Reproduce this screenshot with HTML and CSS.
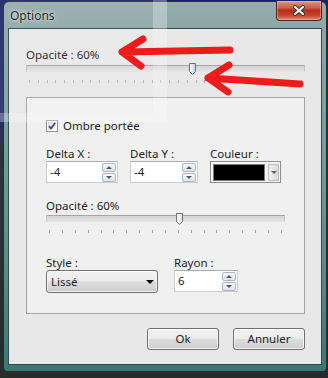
FILE: index.html
```html
<!DOCTYPE html>
<html>
<head>
<meta charset="utf-8">
<link rel="stylesheet" href="styles.css">
</head>
<body>
<div class="window">
  <div class="titlebar">
    <span class="title">Options</span>
    <div class="close">
      <svg width="12" height="11" viewBox="0 0 12 11"><path d="M2,2 L10,9 M10,2 L2,9" stroke="#3a3a3a" stroke-width="4" stroke-linecap="round"/><path d="M2,2 L10,9 M10,2 L2,9" stroke="#ffffff" stroke-width="2" stroke-linecap="round"/></svg>
    </div>
  </div>
  <div class="client">
    <div class="lbl">Opacité : 60%</div>
    <div class="slider">
      <div class="track"></div>
      <div class="ticks t32">
        <i></i><i></i><i></i><i></i><i></i><i></i><i></i><i></i><i></i><i></i><i></i><i></i><i></i><i></i><i></i><i></i><i></i><i></i><i></i><i></i><i></i><i></i><i></i><i></i><i></i><i></i><i></i><i></i><i></i><i></i><i></i><i></i>
      </div>
      <svg class="thumb thumb-top" width="7" height="12" viewBox="0 0 7 12"><defs><linearGradient id="tg1" x1="0" y1="0" x2="1" y2="0"><stop offset="0" stop-color="#ffffff"/><stop offset="1" stop-color="#b9d3ea"/></linearGradient></defs><path d="M0.5,0.5 H6.5 V8.5 L3.5,11.5 L0.5,8.5 Z" fill="url(#tg1)" stroke="#5a7690"/></svg>
    </div>

    <div class="group">
      <div class="check">
        <svg class="box" width="12" height="12" viewBox="0 0 12 12"><defs><linearGradient id="cg" x1="0" y1="0" x2="1" y2="1"><stop offset="0" stop-color="#d6d6d6"/><stop offset="1" stop-color="#ffffff"/></linearGradient></defs><rect x="0.5" y="0.5" width="11" height="11" fill="#fff" stroke="#8e8f8f"/><rect x="2" y="2" width="8" height="8" fill="url(#cg)"/><path d="M3,6 L5,8.6 L9.2,2.8" fill="none" stroke="#3c4f95" stroke-width="1.8" stroke-linejoin="round"/></svg>
        <span>Ombre portée</span>
      </div>

      <div class="row3">
        <div class="field">
          <div class="lbl">Delta X :</div>
          <div class="spin w72">
            <span class="val">-4</span>
            <span class="spinbtns"><span class="sb up"></span><span class="sb down"></span></span>
          </div>
        </div>
        <div class="field">
          <div class="lbl">Delta Y :</div>
          <div class="spin w68">
            <span class="val">-4</span>
            <span class="spinbtns"><span class="sb up"></span><span class="sb down"></span></span>
          </div>
        </div>
        <div class="field">
          <div class="lbl">Couleur :</div>
          <div class="colorcombo">
            <span class="swatch"></span>
            <span class="dropbtn"><span class="tri"></span></span>
          </div>
        </div>
      </div>

      <div class="lbl lbl-op">Opacité : 60%</div>
      <div class="slider slider-in">
        <div class="track"></div>
        <div class="ticks">
          <i></i><i></i><i></i><i></i><i></i><i></i><i></i><i></i><i></i><i></i><i></i><i></i><i></i><i></i><i></i><i></i><i></i><i></i><i></i>
        </div>
        <svg class="thumb thumb-in" width="7" height="12" viewBox="0 0 7 12"><defs><linearGradient id="tg2" x1="0" y1="0" x2="1" y2="0"><stop offset="0" stop-color="#ffffff"/><stop offset="1" stop-color="#dcdcdc"/></linearGradient></defs><path d="M0.5,0.5 H6.5 V8.5 L3.5,11.5 L0.5,8.5 Z" fill="url(#tg2)" stroke="#6f6f6f"/></svg>
      </div>

      <div class="row2">
        <div class="field">
          <div class="lbl">Style :</div>
          <div class="combo">
            <span>Lissé</span>
            <span class="blacktri"></span>
          </div>
        </div>
        <div class="field">
          <div class="lbl">Rayon :</div>
          <div class="spin w64">
            <span class="val">6</span>
            <span class="spinbtns"><span class="sb up"></span><span class="sb down"></span></span>
          </div>
        </div>
      </div>
    </div>

    <div class="buttons">
      <div class="btn">Ok</div>
      <div class="btn">Annuler</div>
    </div>
  </div>
</div>

<div class="glare"></div>

<svg class="arrows" width="328" height="378" viewBox="0 0 328 378">
  <g fill="none" stroke="#ee1b1b" stroke-width="7" stroke-linecap="round" stroke-linejoin="round">
    <path d="M230,50 L122,52 M143,39 L122,52 L141,66"/>
    <path d="M300,84 L208,78 M229,65 L208,78 L228,92"/>
  </g>
</svg>
</body>
</html>
```

FILE: styles.css
```css
* { box-sizing: border-box; }
html, body { margin: 0; padding: 0; }
body {
  width: 328px;
  height: 378px;
  overflow: hidden;
  position: relative;
  background: linear-gradient(#1c2460 0, #25306e 30%, #2a3438 40%, #262c2c 100%);
  font-family: "Noto Sans", sans-serif;
  font-size: 11.5px;
  color: #1e1e1e;
}
.window {
  margin: 1px 0 0 3px;
  width: 324px;
  height: 371px;
  border: 1px solid #22302f;
  border-radius: 6px 6px 4px 4px;
  background: linear-gradient(#97acad 0, #8ca6a6 30px, #74a09e 140px, #528a87 280px, #3a7773 100%);
  padding: 0 4px 6px 4px;
  display: flex;
  flex-direction: column;
}
.titlebar {
  height: 26px;
  flex: none;
  display: flex;
  justify-content: space-between;
  align-items: flex-start;
}
.title {
  padding: 6px 0 0 2px;
  line-height: 15px;
  font-size: 12px;
  color: #111;
  text-shadow: 0 0 5px #e8f0f0, 0 0 2px rgba(255,255,255,0.7);
}
.close {
  margin-top: -1px;
  width: 46px;
  height: 20px;
  border: 1px solid #4a2320;
  border-top: none;
  border-radius: 0 0 4px 4px;
  background: linear-gradient(#d99a8c 0, #c9614f 35%, #b52d1c 50%, #c8432f 75%, #e08a6c 100%);
  box-shadow: inset 0 0 0 1px rgba(255,200,190,0.45);
  display: flex;
  align-items: center;
  justify-content: center;
}
.client {
  flex: 1;
  border: 1px solid #34484a;
  background: #e8e8e8;
  padding: 19px 16px 0 17px;
  display: flex;
  flex-direction: column;
}
.lbl {
  line-height: 13px;
  height: 13px;
  white-space: nowrap;
}
.slider {
  position: relative;
  margin-top: 2px;
  padding-top: 2px;
  height: 22px;
}
.track {
  height: 7px;
  border: 1px solid #c3c3c3;
  border-top-color: #a4a4a4;
  border-bottom-color: #e4e4e4;
  background: linear-gradient(#d4d4d4, #e2e2e2);
}
.ticks {
  margin-top: 8px;
  padding: 0 3px;
  height: 3px;
  display: flex;
  justify-content: space-between;
}
.ticks i {
  display: block;
  width: 1px;
  height: 3px;
  background: #a3a3a3;
}
.ticks.t32 i { background: #b3b3b3; }
.thumb { position: absolute; top: 0; }
.thumb-top { left: 163px; }
.thumb-in { left: 130px; }

.group {
  margin-top: 12px;
  border: 1px solid #a2a2a2;
  background: #f0f0f0;
  padding: 21px 19px 20px 19px;
  display: flex;
  flex-direction: column;
}
.check {
  height: 13px;
  display: flex;
  align-items: center;
  line-height: 13px;
}
.check .box { flex: none; margin-right: 5px; }
.row3 {
  margin-top: 15px;
  display: flex;
  gap: 12px;
}
.field { display: flex; flex-direction: column; gap: 1px; }
.spin {
  height: 22px;
  border: 1px solid #c9ccd1;
  border-top-color: #a9acb2;
  background: #fff;
  display: flex;
  align-items: center;
  padding: 0 1px 0 3px;
}
.w72 { width: 72px; }
.w68 { width: 68px; }
.w64 { width: 64px; }
.val { flex: 1; line-height: 14px; }
.spinbtns {
  display: flex;
  flex-direction: column;
  gap: 1px;
}
.sb {
  width: 14px;
  height: 9px;
  border: 1px solid #a9b5c2;
  border-radius: 2px;
  background: linear-gradient(#f8f9fb, #dde3e9);
  display: flex;
  align-items: center;
  justify-content: center;
}
.sb::after {
  content: "";
  width: 0;
  height: 0;
  border-left: 3px solid transparent;
  border-right: 3px solid transparent;
}
.sb.up::after { border-bottom: 3px solid #4d5866; }
.sb.down::after { border-top: 3px solid #4d5866; }
.colorcombo {
  width: 71px;
  height: 22px;
  border: 1px solid #8f8f8f;
  background: #f4f4f4;
  padding: 2px 1px 1px 2px;
  display: flex;
  gap: 3px;
}
.swatch {
  flex: 1;
  background: #000;
  border: 1px solid #7a7a7a;
}
.dropbtn {
  width: 11px;
  border: 1px solid #bcbcbc;
  background: linear-gradient(to right, #f2f2f2, #d9d9d9);
  display: flex;
  align-items: center;
  justify-content: center;
}
.tri {
  width: 0;
  height: 0;
  border-left: 3px solid transparent;
  border-right: 3px solid transparent;
  border-top: 3px solid #606060;
}
.lbl-op { margin-top: 16px; }
.slider-in { margin-top: 1px; height: 20px; }
.row2 {
  margin-top: 23px;
  display: flex;
  gap: 16px;
}
.combo {
  width: 112px;
  height: 23px;
  border: 1px solid #707070;
  border-radius: 3px;
  background: linear-gradient(#f3f3f3 0, #ebebeb 48%, #dcdcdc 52%, #cfcfcf 100%);
  box-shadow: inset 0 0 0 1px rgba(255,255,255,0.7);
  display: flex;
  align-items: center;
  justify-content: space-between;
  padding: 0 3px 0 4px;
}
.blacktri {
  width: 0;
  height: 0;
  border-left: 4px solid transparent;
  border-right: 4px solid transparent;
  border-top: 4px solid #000;
}
.buttons {
  margin-top: 14px;
  display: flex;
  justify-content: flex-end;
  gap: 14px;
}
.btn {
  width: 72px;
  height: 22px;
  border: 1px solid #707070;
  border-radius: 3px;
  background: linear-gradient(#f3f3f3 0, #ebebeb 48%, #dcdcdc 52%, #cfcfcf 100%);
  box-shadow: inset 0 0 0 1px rgba(255,255,255,0.75);
  display: flex;
  align-items: center;
  justify-content: center;
  line-height: 14px;
}
.glare {
  position: absolute;
  left: 0;
  top: 0;
  width: 167px;
  height: 122px;
  border-right: 14px solid rgba(255,255,255,0.26);
  border-bottom: 9px solid rgba(255,255,255,0.26);
  background: rgba(255,255,255,0.07);
  pointer-events: none;
}
.arrows {
  position: absolute;
  left: 0;
  top: 0;
  pointer-events: none;
}
```
